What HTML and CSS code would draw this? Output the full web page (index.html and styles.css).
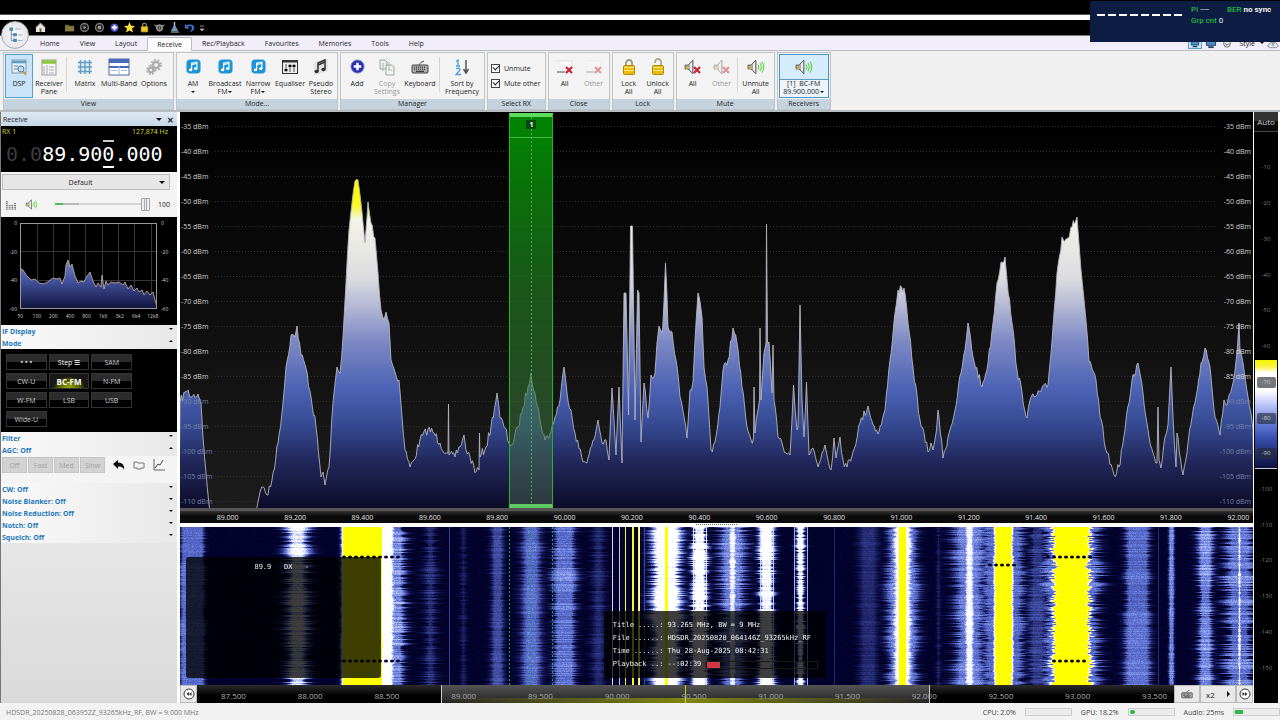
FILE: index.html
```html
<!DOCTYPE html>
<html lang="en">
<head>
<meta charset="utf-8">
<title>SDR Console</title>
<link rel="stylesheet" href="styles.css">
</head>
<body>
<svg class="defs" aria-hidden="true">
  <symbol id="note" viewBox="0 0 16 16"><rect x="0.5" y="0.5" width="15" height="15" rx="4" fill="#1d93d8"/><path d="M6 11.5V4.6L11.6 3.4V10" fill="none" stroke="#fff" stroke-width="1.3"/><path d="M6 6L11.6 4.8" stroke="#fff"/><ellipse cx="4.9" cy="11.6" rx="1.8" ry="1.4" fill="#fff"/><ellipse cx="10.4" cy="10.3" rx="1.8" ry="1.4" fill="#fff"/></symbol>
  <symbol id="speaker" viewBox="0 0 18 16"><path d="M1 6h3l5-5v14l-5-5H1z" fill="#aaa" stroke="#555" stroke-width=".8"/><path d="M6 5l2-2v10l-2-2z" fill="#eee"/><path d="M2 7h2v3H2z" fill="#d8b020"/></symbol>
  <symbol id="waves" viewBox="0 0 18 16"><path d="M11 5.5q1.6 2.500 0 5M13 4q2.600 4 0 8M15 2.500q3.600 5.500 0 11" fill="none" stroke="#5cd43c" stroke-width="1.1"/></symbol>
  <symbol id="cross" viewBox="0 0 8 8"><path d="M1 1l6 6M7 1L1 7" stroke="#c8283a" stroke-width="2.300"/></symbol>
  <symbol id="lock" viewBox="0 0 14 18"><path d="M4 8V5a3 3 0 0 1 6 0v3" fill="none" stroke="#a09a80" stroke-width="1.800"/><rect x="1.500" y="7.500" width="11" height="9" rx="1" fill="#e8bc10" stroke="#b08a00"/><path d="M2 9.500h10M2 12.500h10" stroke="#fbe678"/></symbol>
  <symbol id="unlock" viewBox="0 0 14 18"><path d="M4 5V4a3 3 0 0 1 6 0v4" fill="none" stroke="#b0a98c" stroke-width="1.800"/><rect x="1.500" y="7.500" width="11" height="9" rx="1" fill="#e8bc10" stroke="#b08a00"/><path d="M2 9.500h10M2 12.500h10" stroke="#fbe678"/></symbol>
  <symbol id="keys" viewBox="0 0 18 14"><path d="M8 5Q9 2 13 1" fill="none" stroke="#555"/><rect x="1" y="5" width="16" height="8" rx="1" fill="#aaa" stroke="#444"/><path d="M3 7.200h12M3 9.200h12" stroke="#222" stroke-dasharray="1 1"/><path d="M5 11.300h8" stroke="#222"/></symbol>
</svg>

<div class="app">
  <div class="strip-black"></div>
  <div class="strip-white"></div>
  <header class="quick">
    <svg viewBox="0 0 12 12"><path d="M1 6L6 1l5 5v5H1z" fill="#e6e6e0"/><path d="M1 6L6 1l5 5" fill="none" stroke="#a88" /><rect x="5" y="7" width="2" height="4" fill="#753"/></svg>
    <svg class="gap" viewBox="0 0 12 12"><path d="M1 3h4l1 1h5v6H1z" fill="#6c6230"/><path d="M2 5h9v5H1z" fill="#847840"/></svg>
    <svg viewBox="0 0 12 12"><circle cx="6" cy="6" r="4.300" fill="#222" stroke="#777" stroke-width="1.500"/><path d="M5 4l3 2-3 2z" fill="#999"/></svg>
    <svg viewBox="0 0 12 12"><circle cx="6" cy="6" r="4.300" fill="#222" stroke="#777" stroke-width="1.500"/><rect x="4.300" y="4.300" width="3.400" height="3.400" fill="#999"/></svg>
    <svg viewBox="0 0 12 12"><circle cx="6" cy="6" r="4.500" fill="#4048c8"/><path d="M6 3v6M3 6h6" stroke="#fff" stroke-width="2"/></svg>
    <svg viewBox="0 0 12 12"><path d="M6 0l1.700 4L12 4.400 8.800 7.200l1 4.300L6 9.200l-3.800 2.300 1-4.300L0 4.400 4.300 4z" fill="#ffdc38"/></svg>
    <svg viewBox="0 0 14 18"><use href="#lock"/></svg>
    <svg viewBox="0 0 12 12"><path d="M0 2.500l3 1q3-2 6 0l3-1-2 3q0 5-4 5t-4-5z" fill="#8e8e86"/><circle cx="6" cy="6.500" r="2" fill="#333"/><circle cx="6" cy="6.500" r=".8" fill="#bbb"/></svg>
    <svg viewBox="0 0 12 12"><path d="M6 0v5" stroke="#bcd" stroke-width="1.500"/><path d="M5 4h2l3 6H2z" fill="#7097b8"/><path d="M2 11h9" stroke="#bbb"/></svg>
    <svg viewBox="0 0 12 12"><path d="M1 2v5h5L4 5q4-2 4.500 1T6 11q5-1 5-5T4 3L3 4z" fill="#3d78c8"/></svg>
    <svg class="caret" viewBox="0 0 6 8"><path d="M1 2h4M1 5h4L3 7z" stroke="#aaa" fill="#aaa" stroke-width=".8"/></svg>
  </header>

  <nav class="tabs">
    <button>Home</button><button>View</button><button>Layout</button><button class="active">Receive</button><button>Rec/Playback</button><button>Favourites</button><button>Memories</button><button>Tools</button><button>Help</button>
    <div class="tab-tools">
      <svg class="picked" viewBox="0 0 14 12"><rect x="2" y="2" width="10" height="6" fill="#4a90c8" stroke="#246"/><path d="M4 10h6" stroke="#246" stroke-width="2"/></svg>
      <svg viewBox="0 0 14 12"><rect x="2" y="2" width="10" height="6" fill="#4a90c8" stroke="#246"/><path d="M4 10h6" stroke="#246" stroke-width="2"/></svg>
      <svg viewBox="0 0 14 12"><path d="M3.500 3.500h7v3a3.500 3.500 0 0 1-7 0z" fill="#eee" stroke="#666"/><path d="M5 6l2 2 2-2" fill="none" stroke="#444"/></svg>
      <button>Style</button><i class="down"></i>
      <svg viewBox="0 0 14 12"><path d="M1 9l3-4h6l3 4-3 1.500H4z" fill="#e4e8ee" stroke="#889"/><circle cx="7" cy="7" r="1.500" fill="#9ab"/></svg>
    </div>
  </nav>
  <button class="orb" aria-label="Application menu"><svg viewBox="0 0 28 28"><path d="M10 9v11h4M10 13.500h4" fill="none" stroke="#789" /><rect x="8" y="6" width="4" height="3.500" fill="#4a88b8"/><rect x="12" y="12" width="4" height="3.500" fill="#4a88b8"/><rect x="12" y="18" width="4" height="3.500" fill="#4a88b8"/><path d="M14 7.500h6M17 14h5M17 20h5" stroke="#9ab"/></svg></button>

  <section class="ribbon">
    <div class="group">
      <div class="tools">
        <button class="tool w28 on"><svg viewBox="0 0 18 18"><rect x="2" y="2" width="14" height="13" fill="#e2ecf0" stroke="#7c9aa8"/><path d="M2 4h14" stroke="#5b9fc8" stroke-width="2.500"/><path d="M4 8h4M4 11h4" stroke="#88a"/><circle cx="11" cy="11" r="3" fill="#bfe2f8" stroke="#3c80b0"/><path d="M13 13l3 4" stroke="#c89838" stroke-width="2"/></svg><span>DSP</span></button>
        <button class="tool w32"><svg viewBox="0 0 18 18"><rect x="2" y="2" width="14" height="15" fill="#f4f4f0" stroke="#99a"/><path d="M2 4h14" stroke="#8cc63c" stroke-width="3.500"/><path d="M7 7v10M4 8v8M9 9h5M9 12h5M9 15h5" stroke="#a8b0b8"/></svg><span>Receiver<br>Pane</span></button>
        <i class="sep"></i>
        <button class="tool w34"><svg viewBox="0 0 18 18"><rect x="2" y="2" width="14" height="14" fill="#e4f0f8"/><path d="M2 4.500h14M2 9h14M2 13.500h14M4.500 2v14M9 2v14M13.500 2v14" stroke="#659cc4" stroke-width="1.400"/></svg><span>Matrix</span></button>
        <button class="tool w34"><svg class="wide" viewBox="0 0 22 18"><rect x="1" y="1" width="20" height="16" fill="#fff" stroke="#5068a8"/><path d="M1 3h20" stroke="#4868b8" stroke-width="4"/><path d="M1 9h20" stroke="#4868b8" stroke-width="2"/><path d="M11 8v9M3 12.500h6M13 12.500h6" stroke="#a8b8d8"/></svg><span>Multi-Band</span></button>
        <button class="tool w38"><svg viewBox="0 0 18 18"><circle cx="11" cy="7" r="5" fill="none" stroke="#b4b4b4" stroke-width="2" stroke-dasharray="2 1.500"/><circle cx="11" cy="7" r="3" fill="#eee" stroke="#aaa" stroke-width="2"/><circle cx="6" cy="12" r="4" fill="none" stroke="#b4b4b4" stroke-width="2" stroke-dasharray="2 1.200"/><circle cx="6" cy="12" r="2.200" fill="#eee" stroke="#aaa" stroke-width="2"/></svg><span>Options</span></button>
      </div>
      <h2>View</h2>
    </div>
    <div class="group">
      <div class="tools">
        <button class="tool w30"><svg class="n"><use href="#note"/></svg><span>AM</span><i class="down"></i></button>
        <button class="tool w34"><svg class="n"><use href="#note"/></svg><span>Broadcast<br>FM<i class="down"></i></span></button>
        <button class="tool w32"><svg class="n"><use href="#note"/></svg><span>Narrow<br>FM<i class="down"></i></span></button>
        <button class="tool w32"><svg viewBox="0 0 18 18"><rect x="1.500" y="2.500" width="15" height="13" fill="#eee" stroke="#333"/><path d="M1 3.500h16" stroke="#333" stroke-width="2"/><path d="M5 6v8M9 6v8M13 6v8" stroke="#555"/><path d="M3.500 12h3M7.500 8h3M11.500 8h3" stroke="#111" stroke-width="2"/></svg><span>Equaliser</span></button>
        <button class="tool w30"><svg viewBox="0 0 18 18"><path d="M2 17L16 13V1H14L2 4z" fill="#e2e2e2"/><path d="M6 13V5l7-3v9" fill="none" stroke="#333" stroke-width="1.500"/><path d="M6 7l7-3" stroke="#333" stroke-width="1.500"/><ellipse cx="4.600" cy="13.500" rx="2.200" ry="1.700" fill="#333"/><ellipse cx="11.500" cy="11.500" rx="2.200" ry="1.700" fill="#333"/></svg><span>Pseudo<br>Stereo</span></button>
      </div>
      <h2>Mode...</h2>
    </div>
    <div class="group">
      <div class="tools">
        <button class="tool w30"><svg class="n" viewBox="0 0 16 16"><circle cx="8" cy="8" r="7" fill="#2b30b0" stroke="#7c80d0"/><path d="M8 4v8M4 8h8" stroke="#fff" stroke-width="2.600"/></svg><span>Add</span></button>
        <button class="tool w30" disabled><svg viewBox="0 0 18 18"><path d="M2 2h5l2 2v7H2z" fill="#eee" stroke="#9aa8a0"/><path d="M8 7h6l2 2v8H8z" fill="#f4f4f4" stroke="#9aa8a0"/><path d="M5 5v8M11 4v8M10 12h4" stroke="#9ab8a8"/></svg><span>Copy<br>Settings</span></button>
        <button class="tool w36"><svg viewBox="0 0 18 14"><use href="#keys"/></svg><span>Keyboard</span></button>
        <i class="sep"></i>
        <button class="tool w44"><svg viewBox="0 0 18 18"><path d="M3 3.500L5 2v6M3 8h4M3 11q4-2 4 1L3 16.500h5" fill="none" stroke="#45a0dc" stroke-width="1.300"/><path d="M13 2v13M10.500 11l2.500 4 2.500-4" fill="none" stroke="#555" stroke-width="1.500"/></svg><span>Sort by<br>Frequency</span></button>
      </div>
      <h2>Manager</h2>
    </div>
    <div class="group">
      <div class="tools checks">
        <label><input type="checkbox" checked>Unmute</label>
        <label><input type="checkbox" checked>Mute other</label>
      </div>
      <h2>Select RX</h2>
    </div>
    <div class="group">
      <div class="tools">
        <button class="tool w30"><svg viewBox="0 0 18 18"><path d="M1 3h15v8" fill="#fafafa" stroke="#ddd"/><path d="M1 14h8" stroke="#555"/><use href="#cross" x="9" y="8" width="8" height="8"/></svg><span>All</span></button>
        <button class="tool w28" disabled><svg class="faded" viewBox="0 0 18 18"><path d="M1 3h15v8" fill="#fafafa" stroke="#ddd"/><path d="M1 14h8" stroke="#555"/><use href="#cross" x="9" y="8" width="8" height="8"/></svg><span>Other</span></button>
      </div>
      <h2>Close</h2>
    </div>
    <div class="group">
      <div class="tools">
        <button class="tool w30"><svg viewBox="0 0 14 18"><use href="#lock"/></svg><span>Lock<br>All</span></button>
        <button class="tool w28"><svg viewBox="0 0 14 18"><use href="#unlock"/></svg><span>Unlock<br>All</span></button>
      </div>
      <h2>Lock</h2>
    </div>
    <div class="group">
      <div class="tools">
        <button class="tool w30"><svg viewBox="0 0 18 16"><use href="#speaker"/><use href="#cross" x="9" y="7" width="8" height="8"/></svg><span>All</span></button>
        <button class="tool w28" disabled><svg class="faded" viewBox="0 0 18 16"><use href="#speaker"/><use href="#cross" x="9" y="7" width="8" height="8"/></svg><span>Other</span></button>
        <i class="sep"></i>
        <button class="tool w34"><svg viewBox="0 0 18 16"><use href="#speaker"/><use href="#waves"/></svg><span>Unmute<br>All</span></button>
      </div>
      <h2>Mute</h2>
    </div>
    <div class="group">
      <div class="tools">
        <button class="tool rx"><svg viewBox="0 0 18 16"><use href="#speaker"/><use href="#waves"/></svg><span>[1] &nbsp;BC-FM<br>89.900.000<i class="down"></i></span></button>
      </div>
      <h2>Receivers</h2>
    </div>
  </section>

  <main class="work">
    <aside class="panel">
      <div class="panel-title"><span>Receive</span><i class="down big"></i><button aria-label="Close">✕</button></div>
      <div class="tuner">
        <div class="tuner-top"><span>RX 1</span><span>127,874 Hz</span></div>
        <div class="freq"><span class="dim">0.0</span>89.90<span class="mark">0</span>.000</div>
      </div>
      <div class="audio">
        <div class="profile"><select aria-label="Profile"><option>Default</option></select><i class="down big"></i></div>
        <div class="volume">
          <svg viewBox="0 0 12 12"><path d="M1 3h2M1 5h2M1 7h2M1 9h2M1 11h2M4 7h2M4 9h2M4 11h2M7 9h2M7 11h2M7 7h2M10 5h2M10 7h2M10 9h2M10 11h2" stroke="#555"/></svg>
          <svg viewBox="0 0 18 16"><use href="#speaker"/><use href="#waves"/></svg>
          <input type="range" min="0" max="100" value="100" aria-label="Volume"><output>100</output>
        </div>
      </div>
      <div class="audio-plot">
        <div class="ys"><span>0</span><span>-20</span><span>-40</span><span>-60</span></div>
        <svg class="mini" viewBox="0 0 137 86" preserveAspectRatio="none">
          <defs><linearGradient id="mg" x1="0" y1="36" x2="0" y2="86" gradientUnits="userSpaceOnUse"><stop offset="0" stop-color="#7886c4"/><stop offset=".4" stop-color="#4656a4"/><stop offset="1" stop-color="#10123a"/></linearGradient></defs>
          <path class="mini-grid" d="M17.500 0V86M33.500 0V86M49.500 0V86M65.500 0V86M82.500 0V86M98.500 0V86M114.500 0V86M131.500 0V86M0 28.500H137M0 57.500H137"/>
          <path d="M0 86V45L3 47 7 53 11 57 15 56 19 60 24 61 29 58 33 55 37 56 40 55 42 61 45 53 46 42 48 37 50 44 52 41 55 53 58 60 61 58 64 59 67 53 70 49 73 58 76 64 78 60 81 64 82 52 84 66 86 58 88 62 91 59 95 60 99 59 103 62 105 59 108 66 111 62 114 68 117 65 119 69 122 67 124 72 127 68 130 72 133 69 135 77 137 84V86z" fill="url(#mg)" stroke="#c8b4a0" stroke-width=".8"/>
          <rect x=".5" y=".5" width="136" height="85" fill="none" stroke="#999"/>
        </svg>
        <div class="ys"><span>0</span><span>-20</span><span>-40</span><span>-60</span></div>
        <div class="xs"><span>50</span><span>100</span><span>200</span><span>400</span><span>800</span><span>1k6</span><span>3k2</span><span>6k4</span><span>12k8</span></div>
      </div>
      <button class="fold">IF Display<i class="down"></i></button>
      <button class="fold">Mode<i class="down up"></i></button>
      <div class="modes">
        <button><b>• • •</b></button><button class="lit">Step ☰</button><button>SAM</button>
        <button>CW-U</button><button class="sel">BC-FM</button><button>N-FM</button>
        <button>W-FM</button><button>LSB</button><button>USB</button>
        <button>Wide-U</button>
      </div>
      <button class="fold">Filter<i class="down"></i></button>
      <button class="fold">AGC: Off<i class="down up"></i></button>
      <div class="agc">
        <button disabled>Off</button><button disabled>Fast</button><button disabled>Med</button><button disabled>Slow</button>
        <svg viewBox="0 0 12 12"><path d="M0 5l5-4v2.500q7 0 6 7.500-1-4-6-3.500V10z" fill="#111"/></svg>
        <svg viewBox="0 0 12 12"><path d="M1 3h3l1 1h6v5H8v1H4V9H1z" fill="#f4f4f4" stroke="#777"/></svg>
        <svg viewBox="0 0 12 12"><path d="M1 0v11h11" fill="none" stroke="#666"/><path d="M2 9l3-4 2 1 3-5" fill="none" stroke="#444"/></svg>
      </div>
      <button class="fold">CW: Off<i class="down"></i></button>
      <button class="fold">Noise Blanker: Off<i class="down"></i></button>
      <button class="fold">Noise Reduction: Off<i class="down"></i></button>
      <button class="fold">Notch: Off<i class="down"></i></button>
      <button class="fold">Squelch: Off<i class="down"></i></button>
    </aside>

    <section class="scope">
      <div class="spectrum">
        <svg id="plot" viewBox="180 112 1073 396" preserveAspectRatio="none">
          <defs>
            <linearGradient id="sky" x1="0" y1="112" x2="0" y2="508" gradientUnits="userSpaceOnUse"><stop offset="0" stop-color="#000"/><stop offset="1" stop-color="#1c1c1c"/></linearGradient>
            <linearGradient id="heat" x1="0" y1="112" x2="0" y2="508" gradientUnits="userSpaceOnUse"><stop offset=".2" stop-color="#fcfc00"/><stop offset=".235" stop-color="#f8f820"/><stop offset=".272" stop-color="#f4f4e8"/><stop offset=".42" stop-color="#dcdce0"/><stop offset=".49" stop-color="#b4b8d4"/><stop offset=".58" stop-color="#7c88c4"/><stop offset=".7" stop-color="#4c62b4"/><stop offset=".79" stop-color="#364a92"/><stop offset=".88" stop-color="#22285c"/><stop offset="1" stop-color="#0c0c28"/></linearGradient>
          </defs>
          <rect x="180" y="112" width="1073" height="396" fill="url(#sky)"/>
          <path class="grid" d="M215 126.500H1217M215 151.500H1217M215 176.500H1217M215 201.500H1217M215 226.500H1217M215 251.500H1217M215 276.500H1217M215 301.500H1217M215 326.500H1217M215 351.500H1217M215 376.500H1217M215 401.500H1217M215 426.500H1217M215 451.500H1217M215 476.500H1217M215 501.500H1217"/>
          <path id="trace" fill="url(#heat)" stroke="#b4b4c0" stroke-width=".9"/>
        </svg>
        <div class="dbm"><span>-35 dBm</span><span>-40 dBm</span><span>-45 dBm</span><span>-50 dBm</span><span>-55 dBm</span><span>-60 dBm</span><span>-65 dBm</span><span>-70 dBm</span><span>-75 dBm</span><span>-80 dBm</span><span>-85 dBm</span><span class="low">-90 dBm</span><span class="low">-95 dBm</span><span class="low">-100 dBm</span><span class="low">-105 dBm</span><span class="low">-110 dBm</span></div>
        <div class="dbm right"><span>-35 dBm</span><span>-40 dBm</span><span>-45 dBm</span><span>-50 dBm</span><span>-55 dBm</span><span>-60 dBm</span><span>-65 dBm</span><span>-70 dBm</span><span>-75 dBm</span><span>-80 dBm</span><span>-85 dBm</span><span class="low">-90 dBm</span><span class="low">-95 dBm</span><span class="low">-100 dBm</span><span class="low">-105 dBm</span><span class="low">-110 dBm</span></div>
        <div class="band"><b>1</b></div>
      </div>
      <div class="axis"><div class="axis-row"><span>89.000</span><span>89.200</span><span>89.400</span><span>89.600</span><span>89.800</span><span>90.000</span><span>90.200</span><span>90.400</span><span>90.600</span><span>90.800</span><span>91.000</span><span>91.200</span><span>91.400</span><span>91.600</span><span>91.800</span><span>92.000</span></div></div>
      <div class="splitter"></div>
      <div class="fall">
        <canvas id="water" width="1073" height="158"></canvas>
        <pre class="note">89.9   DX   -</pre>
        <div class="info">
          <pre>Title .....: 93.265 MHz, BW = 9 MHz
File ......: HDSDR_20250828_064146Z_93265kHz_RF
Time ......: Thu 28-Aug-2025 08:42:31</pre>
          <div class="play"><pre>Playback ..: --:02:39 </pre><div class="bar"><i></i></div></div>
        </div>
      </div>
      <div class="navbar">
        <button class="nb" aria-label="Back"><svg viewBox="0 0 12 12"><circle cx="6" cy="6" r="5" fill="#fff" stroke="#333"/><path d="M6 4v4L3.500 6zM8.500 4v4L6 6z" fill="#333"/></svg></button>
        <div class="range"><div class="window"></div><div class="range-row"><span>87.500</span><span>88.000</span><span>88.500</span><span>89.000</span><span>89.500</span><span>90.000</span><span>90.500</span><span>91.000</span><span>91.500</span><span>92.000</span><span>92.500</span><span>93.000</span><span>93.500</span></div></div>
        <button class="nb k" aria-label="Keyboard"><svg viewBox="0 0 18 14"><use href="#keys"/></svg></button>
        <button class="nb x2">x2<i class="next"></i></button>
        <button class="nb" aria-label="Forward"><svg viewBox="0 0 12 12"><circle cx="6" cy="6" r="5" fill="#fff" stroke="#333"/><path d="M6 4v4L8.500 6zM3.500 4v4L6 6z" fill="#333"/></svg></button>
      </div>
    </section>

    <div class="scale">
      <button>Auto</button>
      <div class="scale-body">
        <div class="ramp"></div>
        <div class="scale-row"><span>-10</span><span>-20</span><span>-30</span><span>-40</span><span>-50</span><span>-60</span><span><b>-70</b></span><span><b>-80</b></span><span><b>-90</b></span><span>-100</span><span>-110</span><span>-120</span><span>-130</span><span>-140</span><span>-150</span></div>
      </div>
    </div>
  </main>

  <footer class="status">
    <span class="file">HDSDR_20250828_063952Z_93265kHz_RF, BW = 9.000 MHz</span>
    <span>CPU: 2.0%</span><div class="meter"></div>
    <span>GPU: 18.2%</span><div class="meter"><i class="dot"></i></div>
    <span>Audio: 25ms</span><div class="meter"><i></i></div>
  </footer>

  <div class="rds"><div class="ps"><i></i><i></i><i></i><i></i><i></i><i></i><i></i><i></i></div><div class="rds-text"><div><em>PI</em> ---- <em class="ber">BER</em> <strong>no sync</strong></div><div><em>Grp cnt</em> 0</div></div></div>
</div>
<script src="scope.js"></script>
</body>
</html>
```
FILE: styles.css
```css
* { box-sizing: border-box; }
body { margin: 0; background: #f0f0f0; color: #1c1c1c; font: 7px/9px "Open Sans", "Noto Sans", sans-serif; }
button, select, input { font: inherit; color: inherit; border: 0; padding: 0; margin: 0; background: none; }
pre { margin: 0; }
h2 { margin: 0; font: inherit; }
.defs { position: absolute; width: 0; height: 0; }
.app { position: relative; min-height: 100vh; display: flex; flex-direction: column; overflow: hidden; }
.strip-black { height: 14px; background: #000; }
.strip-white { height: 6px; background: #fff; border-top: 1px solid #555; }
.down { display: inline-block; border: 2px solid transparent; border-top-color: #111; border-bottom: 0; margin-left: 1px; vertical-align: middle; }
.down.big { border-width: 3px; border-bottom: 0; }
.down.up { transform: rotate(180deg); }

.quick { height: 16px; background: #000; border-bottom: 1px solid #777; display: flex; align-items: center; gap: 4px; padding-left: 35px; }
.quick svg { width: 11px; height: 11px; }
.quick svg.gap { margin-left: 14px; }
.quick svg.caret { width: 6px; height: 8px; }
.orb { position: absolute; left: 1px; top: 21px; width: 28px; height: 28px; border: 1px solid #aaa; border-radius: 50%; background: radial-gradient(#fff, #e4e4ea 70%, #c4c8d0); overflow: hidden; }
.orb svg { display: block; width: 100%; height: 100%; }

.tabs { height: 15px; background: #f1eefa; border-bottom: 1px solid #b8bcc4; display: flex; align-items: stretch; padding-left: 30px; }
.tabs > button { padding: 0 10px; }
.tabs > .active { background: #fcfcfc; border: 1px solid #b8bcc4; border-bottom: 0; border-radius: 2px 2px 0 0; margin: 1px 0 -1px; padding: 0 9px; }
.tab-tools { margin-left: auto; display: flex; align-items: center; gap: 2px; }
.tab-tools svg { width: 14px; height: 11px; }
.tab-tools .picked { background: #cfe6f8; border: 1px solid #5aa0d0; }
.tab-tools button { margin: 0 2px 0 3px; }

.ribbon { display: flex; gap: 2px; height: 61px; padding: 1px 0 0 3px; background: #f0f0f0; border-bottom: 2px solid #b4bcc0; }
.group { display: flex; flex-direction: column; border: 1px solid #c0c4c8; background: #f3f3f3; }
.group h2 { height: 10px; line-height: 10px; flex: none; background: #c5d3df; text-align: center; }
.tools { flex: 1; display: flex; padding: 1px; min-height: 0; }
.tool { display: flex; flex-direction: column; align-items: center; white-space: nowrap; padding-top: 3px; border: 1px solid transparent; line-height: 8px; }
.tool svg { width: 18px; height: 18px; flex: none; margin-bottom: 4px; }
.tool svg.wide { width: 22px; }
.tool svg.n { width: 15px; height: 15px; margin: 1px 0 6px; }
.tool:disabled { color: #999; }
.faded { opacity: .45; }
.tool.on { background: #c9e4f8; border-color: #5c9cc8; }
.tool > .down { margin: 3px 0 0; }
.w28 { width: 28px; } .w30 { width: 30px; } .w32 { width: 32px; } .w34 { width: 34px; } .w36 { width: 36px; } .w38 { width: 36px; } .w44 { width: 42px; }
.tool.rx { width: 50px; border-color: #4d94c0; background: linear-gradient(#d4ecfc 24px, #5c9cc8 24px, #5c9cc8 25px, #eef6fc 25px); }
.sep { width: 1px; margin: 3px 1px 6px; background: #d4d4d4; }
.tools.checks { flex-direction: column; gap: 5px; padding: 10px 4px 0 3px; }
.checks label { display: flex; align-items: center; gap: 4px; height: 10px; white-space: nowrap; }
.checks input { appearance: none; width: 9px; height: 9px; border: 1px solid #444; background: #fff; display: grid; place-items: center; }
.checks input:checked::after { content: ""; width: 5px; height: 3px; border-left: 1px solid #222; border-bottom: 1px solid #222; transform: rotate(-45deg); margin-bottom: 2px; }

.work { flex: 1; display: flex; background: #fff; min-height: 0; }
.panel { width: 177px; flex: none; border-left: 1px solid #777; display: flex; flex-direction: column; background: linear-gradient(#f4f4f4, #ececec 60%, #dadada); }
.panel-title { height: 14px; flex: none; display: flex; align-items: center; gap: 5px; padding: 0 3px 0 2px; background: linear-gradient(#dfe9f3, #c5d6e6); }
.panel-title span { margin-right: auto; }
.panel-title button { font-size: 8px; font-weight: bold; }
.tuner { height: 46px; flex: none; background: #000; }
.tuner-top { display: flex; justify-content: space-between; padding: 1px 9px 0 1px; color: #d0d430; }
.freq { color: #fff; font: 20px/36px "DejaVu Sans Mono", monospace; padding-left: 5px; }
.dim { color: #3c3c3c; }
.mark { background: linear-gradient(#ccc, #ccc) center top / 11px 2px no-repeat, linear-gradient(#fff, #fff) center bottom / 11px 2px no-repeat; padding: 2px 0; }
.audio { height: 45px; flex: none; background: #f3f3f3; padding: 2px 7px 0 1px; }
.profile { display: flex; align-items: center; height: 16px; border: 1px solid #bcbcbc; background: #e6e6e6; padding-right: 4px; }
.profile select { flex: 1; appearance: none; text-align: center; text-align-last: center; }
.volume { display: flex; align-items: center; height: 28px; padding-left: 3px; }
.volume svg { width: 11px; height: 11px; margin-right: 9px; }
.volume svg + svg { width: 13px; margin-right: 17px; }
.volume input { appearance: none; flex: 1; min-width: 0; height: 14px; background: linear-gradient(90deg, #4dbd5c 8%, #b8b8b8 8% 25%, #d4d4d4 25%) center / 100% 2px no-repeat; }
.volume input::-webkit-slider-thumb { appearance: none; width: 9px; height: 13px; border: 1px solid #a4a4a4; border-radius: 1px; background: linear-gradient(90deg, #eee 30%, #aaa 30% 40%, #eee 40% 60%, #aaa 60% 70%, #eee 70%); }
.volume output { width: 20px; text-align: right; }
.audio-plot { height: 108px; flex: none; background: #000; color: #ccc; display: grid; grid-template: 86px 1fr / 19px 1fr 20px; padding-top: 6px; font-size: 5px; line-height: 6px; }
.ys { display: flex; flex-direction: column; justify-content: space-between; align-items: flex-end; margin: -3px 3px -3px 0; }
.mini + .ys { align-items: flex-start; margin: -3px 0 -3px 4px; }
.mini { width: 100%; height: 100%; }
.mini-grid { stroke: #353535; fill: none; }
.xs { grid-column: 1 / -1; display: flex; padding: 4px 16px 0 11px; }
.xs span { flex: 1; text-align: center; }
.fold { height: 12px; flex: none; display: flex; align-items: center; justify-content: space-between; padding: 0 4px 0 1px; color: #1c78bc; font-weight: 700; text-align: left; background: linear-gradient(90deg, #fafafa, #e8e8e8); }
.fold .down { margin-bottom: 4px; }
.modes { background: #000; padding: 5px 45px 5px 5px; display: grid; grid-template-columns: repeat(3, 1fr); gap: 3px 2px; flex: none; }
.modes button { height: 16px; color: #ccc; border: 1px solid #333; background: linear-gradient(#2c2c2c 48%, #000 50%); }
.modes .lit { color: #fff; }
.modes .sel { color: #fff; font-weight: 700; font-size: 8px; background: radial-gradient(ellipse at 50% 110%, #a4b800, #4c5400 45%, #181818 60%); }
.agc { height: 27px; flex: none; display: flex; gap: 1px; padding: 1px 0 10px 1px; background: #f4f4f4; }
.agc button { width: 25px; background: #d2d2d2; border: 1px solid #c4c4c4; color: #a0a0a0; }
.agc svg { width: 12px; height: 12px; margin: 2px 0 0 7px; }

.scope { flex: 1; min-width: 0; display: flex; flex-direction: column; margin-left: 3px; background: #fff; }
.spectrum { position: relative; flex: 396 0 0; min-height: 0; overflow: hidden; }
#plot { position: absolute; inset: 0; width: 100%; height: 100%; }
.grid { stroke: #303030; stroke-dasharray: 1 2; fill: none; }
.dbm { position: absolute; top: 2px; bottom: -6px; left: 1px; display: flex; flex-direction: column; color: #d0d0d0; }
.dbm.right { left: auto; right: 2px; text-align: right; }
.dbm span { flex: 1; display: grid; align-items: center; }
.dbm .low { color: #7680a8; }
.band { position: absolute; top: 1px; bottom: 0; left: 30.7%; width: 4.1%; border: 1px solid #28b428; border-width: 4px 1px; border-top-color: #60dc60; border-bottom-color: #60c860; background: repeating-linear-gradient(#58a858 0 2px, transparent 2px 4px) center / 1px 100% no-repeat, linear-gradient(#3cc03c, #3cc03c) 0 20px / 100% 1px no-repeat, linear-gradient(rgba(0, 140, 0, .95), rgba(30, 110, 30, .75) 45%, rgba(90, 120, 90, .4)); text-align: center; }
.band b { display: block; width: 10px; margin: 3px auto; background: #0a4a0a; color: #fff; }
.axis { height: 15px; overflow: hidden; background: linear-gradient(#555 3px, #333 3px, #0a0a0a 8px); color: #e4e4e4; }
.axis-row { display: flex; margin: 0 -19px 0 14px; padding-top: 5px; }
.axis-row span { flex: 1; text-align: center; }
.splitter { height: 4px; background: repeating-linear-gradient(90deg, #666 0 1px, transparent 1px 2px) center 1px / 42px 1px no-repeat, #fff; }
.fall { position: relative; flex: 158 0 0; min-height: 0; overflow: hidden; }
#water { position: absolute; inset: 0; width: 100%; height: 100%; }
.fall pre { font: 7px/13px "DejaVu Sans Mono", monospace; color: #f0f0f0; }
.note { position: absolute; left: .6%; width: 18.1%; top: 30px; bottom: 7px; background: rgba(0, 0, 0, .76); border-radius: 3px; padding: 4px 0 0 68px; }
.info { position: absolute; left: 39.5%; top: 84px; bottom: 7px; width: 222px; padding: 8px 8px 0 9px; background: rgba(0, 0, 0, .76); border-radius: 3px; }
.play { display: flex; align-items: center; }
.bar { flex: 1; height: 8px; border: 1px solid #1a1a1a; }
.bar i { display: block; width: 12%; height: 6px; background: #d03848; }
.navbar { height: 18px; display: flex; flex: none; }
.nb { width: 17px; flex: none; background: #e8e8e8; border: 1px solid #bbb; display: flex; align-items: center; justify-content: center; }
.nb svg { width: 12px; height: 12px; }
.nb.k { width: 26px; }
.nb.x2 { width: 36px; font-size: 8px; gap: 12px; }
.next { border: 3px solid transparent; border-left-color: #111; border-right: 0; }
.range { flex: 1; min-width: 0; position: relative; overflow: hidden; background: linear-gradient(#2c2c2c, #000 60%); }
.window { position: absolute; left: 25%; width: 50%; top: 0; bottom: 0; border: 1px solid #ccc; border-width: 0 1px; background: linear-gradient(#c8d020, #c8d020) center / 1px 100% no-repeat, linear-gradient(90deg, transparent, rgba(150, 156, 10, .8) 50%, transparent) bottom / 100% 5px no-repeat, linear-gradient(#555, #222); }
.range-row { position: relative; display: flex; margin: 0 -19px 0 -2px; padding-top: 6px; font-size: 8px; line-height: 10px; color: #a8a8a8; }
.range-row span { flex: 1; text-align: center; }

.scale { width: 24px; margin: 0 2px 0 1px; flex: none; background: #000; display: flex; flex-direction: column; }
.scale button { height: 20px; color: #ccc; background: linear-gradient(#333 50%, #0a0a0a 50%); border-bottom: 1px solid #444; font-size: 8px; }
.scale-body { position: relative; flex: 1; }
.ramp { position: absolute; left: 1px; right: 1px; top: 40%; height: 19%; background: linear-gradient(#f4f400, #fcf440 6%, #fff 12%, #fff 28%, #c4ccf8 40%, #6880dc 58%, #3850b0 72%, #0c1040); border-bottom: 1px solid #ccc; }
.scale-row { position: absolute; inset: 18px 0 17px; display: flex; flex-direction: column; color: #7c7c7c; font-size: 6px; text-align: center; }
.scale-row span { flex: 1; display: grid; place-items: center; }
.scale-row b { width: 19px; line-height: 11px; border-radius: 2px; background: rgba(40, 44, 56, .65); color: #ccc; font-weight: 400; }

.status { height: 17px; display: flex; align-items: center; gap: 9px; padding: 1px 0 0 6px; background: #f2f2f2; color: #444; }
.file { margin-right: auto; color: #777; }
.meter { width: 47px; height: 8px; border: 1px solid #ccc; background: #ececec; padding: 1px; }
.meter i { display: block; width: 8px; height: 4px; background: #30b840; }
.meter .dot { width: 5px; border-radius: 2px; }

.rds { position: absolute; top: 0; right: 0; width: 190px; height: 42px; background: #0d1c42; border-top: 1px solid #000; color: #f0f0f0; display: flex; padding: 3px 4px 0 7px; font: 8px/11px "Roboto", sans-serif; white-space: nowrap; }
.ps { display: flex; gap: 3px; padding-top: 10px; width: 94px; }
.ps i { width: 8px; height: 2px; background: #fff; }
.rds em { font-style: normal; color: #20d840; }
.rds .ber { margin-left: 16px; }
```
FILE: scope.js
```js
// Spectrum trace: x y pairs on a 180..1253 by 112..508 plane
const pts = `180 402 185 392 187 391 191 397 198 394 201 403 203 437 206 473 210 512 256 512 260 492 263 487 268 495 272 480 278 443 283 403 286 367 291 335 295 337 297 326 301 355 306 368 311 397 316 427 321 477 323 472 325 485 329 467 333 403 337 367 340 373 343 337 346 283 349 230 352 203 355 181 358 180 361 203 365 243 367 217 368 202 371 223 375 238 378 273 381 310 384 320 386 312 389 323 391 360 395 372 399 380 402 417 405 450 410 467 414 460 420 440 428 429 434 433 440 443 446 453 448 453 448.5 404 449 455 455 457 460 447 464 435 466 450 470 457 476 472 479 470 479.5 433 480 457 486 447 491 427 497 393 500 418 505 428 509 443 512 445 518 427 523 407 528 387 531 373 535 393 540 420 545 440 551 432 555 417 560 400 564 367 567 393 571 410 575 433 583 462 588 458 594 440 598 420 602 443 606 440 609 460 612 388 616 455 619 387 622 463 624 293 626 293 628.5 415 630.5 226 632.5 226 635 420 637.5 290 639 293 641 442 644 383 648 418 651 375 655 373 657 343 659 326 662.5 332 665.5 263 668 327 672 332 676 360 680 397 687 438 690 390 693 382 696 323 698 293 702 317 704 367 707 387 711 450 715 442 720 407 723 370 728 360 733 328 737 343 742 387 747 427 751 440 753.5 438 754 387 755 433 758 410 759.5 400 760 328 761 400 764 353 766 343 766.5 224 767.5 343 769 342 772 393 773 345 774 400 778 437 783 447 790 455 793.5 385 797 430 798 427 800 305 802 400 804 437 806.5 382 809 455 813 448 818 467 822 453 825 445 831 470 834 438 836 458 840 437 843 460 847 467 853 452 860 423 868 406 873 425 879 432 885 410 890 360 895 313 898 290 904 288 908 323 913 367 920 420 928 452 931 443 933 450 936.5 430 938 410 939 417 943 458 948 437 955 410 961 373 965 350 968 323 973 357 982 387 988 363 993 323 997 283 1001 262 1005 257 1007 280 1012 323 1017 370 1027 418 1030 400 1037 395 1048 385 1053 327 1057 273 1062 237 1068 238 1072 227 1077 217 1081 270 1085 310 1089 362 1096 380 1100 417 1107 453 1114 475 1119 467 1125 430 1132 380 1138 363 1143 393 1149 437 1157 463 1158 407 1159 460 1161 468 1165 437 1168 425 1171 367 1173 417 1176 467 1177 433 1183 475 1188 443 1195 403 1201 363 1205 348 1210 367 1214 410 1220 435 1224 400 1227 405 1233 383 1237 353 1239 323 1240 350 1243 363 1248 397 1253 430`.split(' ').map(Number);

let seed = 7;
const rnd = () => (seed = (seed * 16807) % 2147483647) / 2147483647;

let d = 'M179 515L';
for (let i = 0; i < pts.length; i += 2) {
  const x = pts[i], y = pts[i + 1];
  d += x + ' ' + y + ' ';
  const nx = pts[i + 2], ny = pts[i + 3];
  if (nx === undefined || y > 507) continue;
  const n = Math.floor((nx - x) / 1.2);
  for (let k = 1; k < n; k++) {
    const t = k / n;
    d += (x + (nx - x) * t).toFixed(1) + ' ' + (y + (ny - y) * t + (rnd() - .5) * 9).toFixed(1) + ' ';
  }
}
document.getElementById('trace').setAttribute('d', d + '1254 515z');

// Waterfall: centre, peak level, flat half-width, skirt width, roughness
const signals = [
  [192, .44, 9, 4, .4], [297, .74, 3, 9, .8], [362, 1.5, 17, 4, .1], [385, .92, 4, 6, .3], [394, .52, 5, 6, 1],
  [430, .26, 1, 6, 1.2], [463, .2, 0, 3, 1], [497, .34, 2, 5, .5], [531, .44, 3, 8, .4],
  [564, .46, 6, 6, .8], [598, .24, 1, 6, .8], [644, .3, 0, 1, .3], [666, .85, 7, 9, .5], [666, 1.1, 1, 1, .2],
  [699, .86, 3, 5, .8], [732, .5, 5, 9, .9], [732, .74, 1, 3, .5], [766, .84, 3, 5, .7], [800, .8, 1, 3, .8],
  [868, .24, 4, 6, .5], [902, .85, 4, 7, .4], [902, .46, 9, 7, .6], [902, 1.15, 3, 2, .2], [938, .2, 0, 2, 1],
  [969, .48, 7, 10, .7], [969, .8, 1, 5, .3], [1003, 1.3, 6, 4, .3], [1003, .42, 14, 7, .8],
  [1037, .3, 3, 7, 1.2], [1071, 1.4, 14, 6, .6], [1071, .42, 21, 7, 1], [1137, .45, 8, 6, .5],
  [1171, .5, 1, 2, .4], [1205, .52, 3, 5, .9], [1239, .46, 7, 8, 1.1], [1239, .74, 0, 2, .5]
];
const lines = [[449, .3], [612, .7], [619, .65], [625, 1.3], [632, 1.3], [633, 1.3], [638, 1.1], [639, .8], [659, .6], [693, .7], [706, .7], [760, .65], [773, .65], [794, .6], [807, .6], [834, .24], [1158, .25]];
const stops = [[0, 0, 0, 40], [.2, 24, 28, 92], [.45, 92, 112, 210], [.6, 160, 176, 244], [.76, 255, 255, 255], [.97, 255, 255, 255], [1.04, 255, 255, 0], [9, 255, 255, 0]];
function colour(v) {
  let i = 1;
  while (v > stops[i][0]) i++;
  const a = stops[i - 1], b = stops[i], t = (v - a[0]) / (b[0] - a[0]);
  return [1, 2, 3].map(k => a[k] + (b[k] - a[k]) * t);
}
const cv = document.getElementById('water'), cx = cv.getContext('2d');
const W = cv.width, H = cv.height, img = cx.createImageData(W, H);
const slow = signals.map(() => .5);
for (let y = 0; y < H; y++) {
  const row = signals.map((s, i) => {
    slow[i] = slow[i] * .88 + rnd() * .12;
    return 1 + s[4] * ((slow[i] - .5) * 3 + (rnd() - .5) * 1.3);
  });
  for (let px = 0; px < W; px++) {
    const x = px + 180;
    let v = rnd() * .03;
    signals.forEach((s, i) => {
      const k = Math.max(.25, row[i]), dist = Math.abs(x - s[0]), over = dist - s[2] * (s[2] > 6 ? .8 + .2 * k : 1);
      if (dist > 50) return;
      const f = over <= 0 ? 1 : Math.exp(-((over / (s[3] * k)) ** 2));
      const amp = s[1] < .95 ? Math.min(.95, s[1] * (.75 + .25 * k) * (.9 + rnd() * .2)) : s[1];
      v = Math.max(v, amp * f);
    });
    for (const l of lines) if (l[0] === x) v = Math.max(v, l[1]);
    const c = colour(v), o = (y * W + px) * 4;
    img.data[o] = c[0]; img.data[o + 1] = c[1]; img.data[o + 2] = c[2]; img.data[o + 3] = 255;
  }
}
cx.putImageData(img, 0, 0);
cx.fillStyle = '#04042c';
for (const [a, b, y] of [[338, 400, 30], [338, 400, 134], [1048, 1092, 30], [1054, 1090, 134], [990, 1020, 38]])
  for (let x = a; x < b; x += 6) { cx.beginPath(); cx.ellipse(x - 180, y, 2, 1.5, 0, 0, 7); cx.fill(); }
cx.fillStyle = '#20a048';
for (const x of [509, 531, 552]) for (let y = 0; y < H; y += 4) cx.fillRect(x - 180, y, 1, 2);
```
